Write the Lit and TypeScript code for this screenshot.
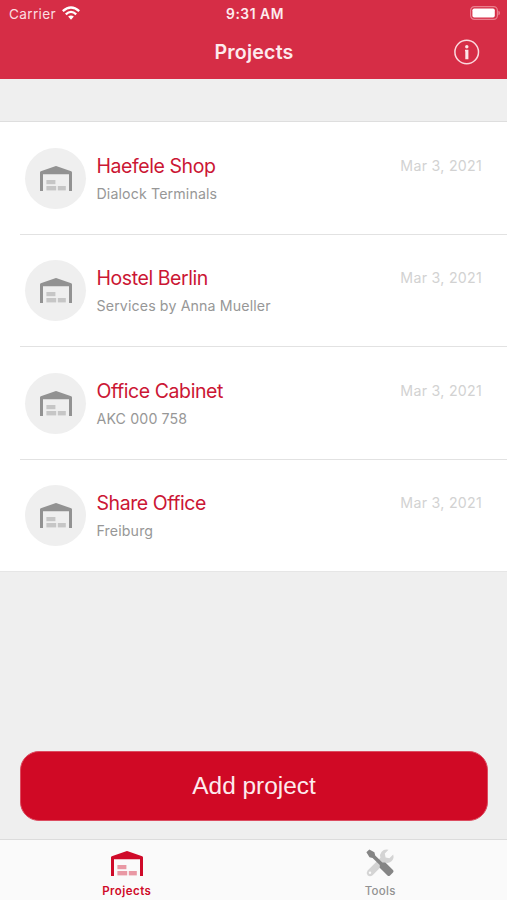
import { LitElement, html, css, svg } from "lit";
import { customElement, property } from "lit/decorators.js";

interface Project {
  name: string;
  detail: string;
  date: string;
}

const projects: Project[] = [
  { name: "Haefele Shop", detail: "Dialock Terminals", date: "Mar 3, 2021" },
  { name: "Hostel Berlin", detail: "Services by Anna Mueller", date: "Mar 3, 2021" },
  { name: "Office Cabinet", detail: "AKC 000 758", date: "Mar 3, 2021" },
  { name: "Share Office", detail: "Freiburg", date: "Mar 3, 2021" },
];

const boxes = svg`
  <rect x="6.4" y="14" width="9" height="4.2" />
  <rect x="6.4" y="20" width="9.8" height="4.4" />
  <rect x="17.8" y="20" width="8" height="4.4" />`;

@customElement("warehouse-icon")
class WarehouseIcon extends LitElement {
  static styles = css`
    :host { display: block; width: 32px; height: 25px; }
    svg { display: block; }
    .boxes { fill: var(--box-color, #c6c6c6); }
  `;
  render() {
    return html`<svg width="32" height="25" viewBox="0 0 32 25">
      <path fill="currentColor" d="M0 6.4 Q0 5.6 .8 5.3 L15.2 .2 Q16 0 16.8 .2 L31.2 5.3 Q32 5.6 32 6.4 V25 H29 V8.2 H3 V25 H0 Z" />
      <g class="boxes">${boxes}</g>
    </svg>`;
  }
}

@customElement("project-row")
class ProjectRow extends LitElement {
  @property({ attribute: false }) project!: Project;
  static styles = css`
    :host { display: flex; box-sizing: border-box; height: 111.5px; padding: 25.8px 25px 0 25px; }
    .avatar { flex: none; width: 61px; height: 61px; border-radius: 50%; background: #efefef; color: #929292;
      display: flex; align-items: center; justify-content: center; }
    .texts { flex: 1; margin-left: 10.5px; padding-top: 6px; }
    .name { font-size: 19.5px; line-height: 24px; color: #cb1634; letter-spacing: -0.43px; white-space: nowrap; }
    .detail { font-size: 14.2px; line-height: 18px; margin-top: 7px; color: #979797; letter-spacing: 0.13px; white-space: nowrap; }
    .date { padding-top: 9px; font-size: 14.2px; line-height: 18px; color: #d2d2d2; letter-spacing: 0.27px; white-space: nowrap; }
  `;
  render() {
    return html`
      <div class="avatar"><warehouse-icon></warehouse-icon></div>
      <div class="texts">
        <div class="name">${this.project.name}</div>
        <div class="detail">${this.project.detail}</div>
      </div>
      <div class="date">${this.project.date}</div>
    `;
  }
}

@customElement("app-root")
class AppRoot extends LitElement {
  static styles = css`
    :host { display: flex; flex-direction: column; height: 900px; overflow: hidden; background: #efefef;
      font-family: Inter, "Liberation Sans", sans-serif; }
    header { flex: none; height: 79px; background: #d62d46; color: #fff; }
    .status { display: grid; grid-template-columns: 1fr auto 1fr; align-items: center; height: 27px;
      padding: 0 7px 0 9px; font-size: 13.6px; }
    .carrier { display: flex; align-items: center; gap: 6px; color: #fbdde1; letter-spacing: 0.35px; }
    .carrier svg { margin-top: -1px; }
    .time { font-size: 13.8px; font-weight: 600; color: #fdecee; letter-spacing: 0.55px; margin-right: -1px; }
    .battery { justify-self: end; display: block; margin-top: -1px; }
    .bar { display: grid; grid-template-columns: 1fr auto 1fr; align-items: center; height: 51px; padding-right: 27px; padding-left: 27px; }
    .title { grid-column: 2; margin: -1px -1px 0 0; font-size: 19.6px; font-weight: 600; color: #fdeaed; letter-spacing: 0.2px; }
    .info { justify-self: end; display: block; margin-top: -1px; }
    .list { flex: none; margin-top: 42px; background: #fff; border-top: 1px solid #dedede; border-bottom: 1px solid #e6e6e6; height: 451px; box-sizing: border-box; }
    .divider { height: 1px; margin-left: 20px; background: #e2e2e2; }
    .action { flex: none; margin: 179px 19px 0 20px; height: 70px; padding: 0; border: 1px solid #dc4c60; border-radius: 19px;
      background: #d00925; color: #fdebed; font: 24.4px "Liberation Sans", sans-serif; }
    .tabs { flex: none; margin-top: 18px; height: 61px; box-sizing: border-box; border-top: 1px solid #dcdcdc;
      background: #fafafa; display: grid; grid-template-columns: 1fr 1fr; }
    .tab { display: flex; flex-direction: column; align-items: center; color: #929292; font-size: 11.5px; font-weight: 500; letter-spacing: 0.3px; padding-top: 11px; }
    .active { color: #cf0a29; font-weight: 600; letter-spacing: 0.45px; --box-color: #e998a4; }
    .label { margin-top: 8px; line-height: 15px; }
    .tool { display: block; height: 30px; margin: -3px 0 -2px; }
  `;
  render() {
    return html`
      <header>
        <div class="status">
          <div class="carrier">
            <span>Carrier</span>
            <svg width="18" height="14" viewBox="0 0 18 14" fill="none" stroke="#fff" stroke-width="2.3">
              <path d="M.8 5.2 Q9 -2.2 17.2 5.2" />
              <path d="M3.8 8.3 Q9 3.5 14.2 8.3" />
              <path d="M9 13.8 L6.1 10.6 Q9 8.2 11.9 10.6 Z" fill="#fff" stroke="none" />
            </svg>
          </div>
          <div class="time">9:31 AM</div>
          <svg class="battery" width="30" height="14" viewBox="0 0 30 14">
            <rect x=".6" y=".6" width="26.8" height="12.8" rx="3.8" fill="none" stroke="#ea7f8e" stroke-width="1.2" />
            <rect x="2.4" y="2.4" width="22.4" height="9.2" rx="1.8" fill="#fff" />
            <path d="M28.4 4.7 Q30 5.2 30 7 T28.4 9.3 Z" fill="#ea7f8e" />
          </svg>
        </div>
        <div class="bar">
          <div class="title">Projects</div>
          <svg class="info" width="26" height="26" viewBox="0 0 26 26">
            <circle cx="12.7" cy="13" r="11.8" fill="none" stroke="#fbd9de" stroke-width="1.5" />
            <circle cx="12.8" cy="7.8" r="1.7" fill="#fce5e8" />
            <path d="M11 10.8 H14.4 V20.2 H11.3 V12.2 H11 Z" fill="#fce5e8" />
          </svg>
        </div>
      </header>
      <main class="list">
        ${projects.map((p, i) => html`
          ${i ? html`<div class="divider"></div>` : ""}
          <project-row .project=${p}></project-row>`)}
      </main>
      <button class="action">Add project</button>
      <nav class="tabs">
        <div class="tab active">
          <warehouse-icon></warehouse-icon>
          <span class="label">Projects</span>
        </div>
        <div class="tab">
          <svg class="tool" width="30" height="30" viewBox="0 0 30 30">
            <path d="M23.5 1.8 L19.8 5.6 L20.6 9.4 L24.4 10.2 L28.2 6.6 Q29.4 11 26.2 13.6 Q23.6 15.6 20.2 14.6 L7.6 27.2 Q5 29.2 2.6 27.2 Q.8 24.8 2.6 22.4 L15.4 9.8 Q14.4 6.4 16.6 3.8 Q19.4 .6 23.5 1.8 Z" fill="#d4d4d4" />
            <circle cx="5" cy="24.8" r="1.2" fill="#fafafa" />
            <path d="M1.4 4.3 L4.3 1.4 L9.4 4.3 L10.2 7.5 L17.4 14.5 L20.4 14.4 L28.2 22.2 Q29 23.4 28 24.6 L25 27.6 Q23.8 28.6 22.5 27.6 L14.7 19.8 L14.8 16.9 L7.6 9.9 L4.5 9.2 Z" fill="#858585" />
          </svg>
          <span class="label">Tools</span>
        </div>
      </nav>
    `;
  }
}
